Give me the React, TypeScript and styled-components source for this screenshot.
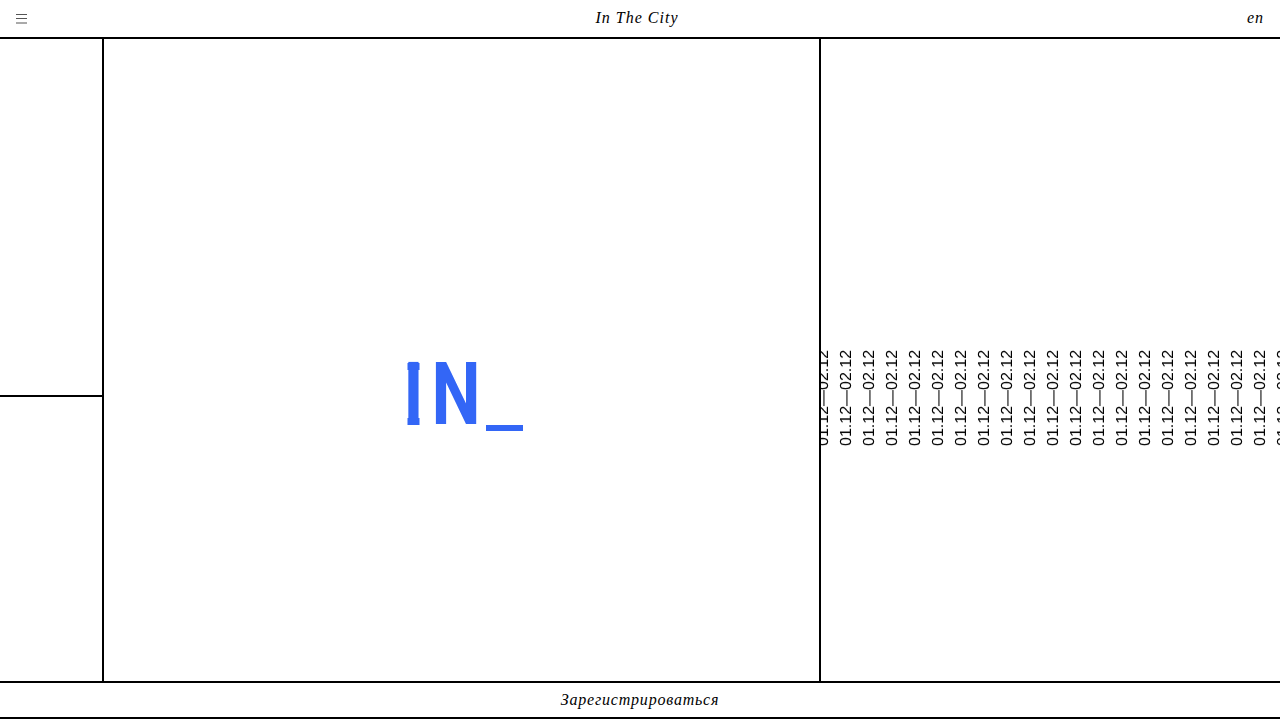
import React from 'react';
import styled, { createGlobalStyle } from 'styled-components';

const GlobalStyle = createGlobalStyle`
    html, body {
        margin: 0;
        padding: 0;
        background: #fff;
    }
`;

const Page = styled.div`
    width: 1280px;
    height: 720px;
    display: flex;
    flex-direction: column;
    overflow: hidden;
    background: #fff;
    color: #000;
    font-family: 'Liberation Serif', serif;
`;

const Header = styled.header`
    height: 37px;
    flex: none;
    display: grid;
    grid-template-columns: 1fr auto 1fr;
    align-items: center;
    padding: 0 16px;
    border-bottom: 2px solid #000;
`;

const MenuButton = styled.button`
    width: 12px;
    height: 12px;
    padding: 0;
    border: 0;
    background: none;
    display: block;
`;

const Title = styled.div`
    font-size: 16px;
    font-style: italic;
    letter-spacing: 1px;
    margin: 0 6px 2px 0;
`;

const Lang = styled.div`
    font-size: 16px;
    font-style: italic;
    letter-spacing: 1px;
    text-align: right;
    margin-bottom: 2px;
`;

const Main = styled.main`
    flex: none;
    height: 642px;
    display: grid;
    grid-template-columns: 102px 715px 1fr;
    column-gap: 2px;
    background: #000;
`;

const SideColumn = styled.div`
    display: grid;
    grid-template-rows: 356px 1fr;
    row-gap: 2px;
`;

const SideCell = styled.div`
    background: #fff;
`;

const LogoPane = styled.div`
    background: #fff;
    display: flex;
    align-items: center;
    justify-content: center;
    padding: 74px 0 0 6px;
    box-sizing: border-box;
`;

const Logo = styled.div`
    display: flex;
    align-items: flex-start;
    height: 68px;
    color: #3366f6;
    font-family: Roboto, sans-serif;
    font-size: 87px;
    font-weight: 700;
    line-height: 62px;
`;

const LogoI = styled.span`
    position: relative;
    width: 15px;
    height: 62px;
    margin: 0 12px 0 -1px;
    display: flex;
    justify-content: center;
    transform: scaleX(0.8);

    &::before,
    &::after {
        content: '';
        position: absolute;
        left: 0;
        width: 15px;
        height: 7px;
        background: #3366f6;
    }

    &::before {
        top: 0;
    }

    &::after {
        bottom: 0;
    }
`;

const LogoN = styled.span`
    width: 46px;
    margin-right: 7px;
    display: flex;
    justify-content: center;
    transform: scaleX(0.8);
`;

const LogoBar = styled.span`
    width: 37px;
    height: 6px;
    margin-top: 62px;
    background: #3366f6;
`;

const DatesPane = styled.div`
    background: #fff;
    overflow: hidden;
    display: flex;
    align-items: center;
    padding-top: 76px;
    box-sizing: border-box;
`;

const DatesStrip = styled.div`
    display: flex;
    flex: none;
    margin-left: -9px;
`;

const DateLabel = styled.span`
    flex: none;
    width: 23px;
    writing-mode: vertical-rl;
    transform: rotate(180deg);
    will-change: transform;
    font-family: 'Liberation Sans', Arial, sans-serif;
    font-size: 16px;
    line-height: 23px;
    white-space: nowrap;
    text-rendering: geometricPrecision;
`;

const Footer = styled.footer`
    height: 34px;
    flex: none;
    display: flex;
    align-items: center;
    justify-content: center;
    border-top: 2px solid #000;
    border-bottom: 2px solid #000;
    font-size: 16px;
    font-style: italic;
    letter-spacing: 0.8px;
`;

const dates = Array.from({ length: 21 }, (_, i) => i);

export default function App() {
    return (
        <Page>
            <GlobalStyle />
            <Header>
                <MenuButton aria-label="menu">
                    <svg width="12" height="12" viewBox="0 0 12 12" fill="none" stroke="#555" strokeWidth="1">
                        <path d="M0 1.5H11M0 5.5H11M0 10H11" />
                    </svg>
                </MenuButton>
                <Title>In The City</Title>
                <Lang>en</Lang>
            </Header>
            <Main>
                <SideColumn>
                    <SideCell />
                    <SideCell />
                </SideColumn>
                <LogoPane>
                    <Logo>
                        <LogoI>I</LogoI>
                        <LogoN>N</LogoN>
                        <LogoBar />
                    </Logo>
                </LogoPane>
                <DatesPane>
                    <DatesStrip>
                        {dates.map((i) => (
                            <DateLabel key={i}>01.12—02.12</DateLabel>
                        ))}
                    </DatesStrip>
                </DatesPane>
            </Main>
            <Footer>Зарегистрироваться</Footer>
        </Page>
    );
}
